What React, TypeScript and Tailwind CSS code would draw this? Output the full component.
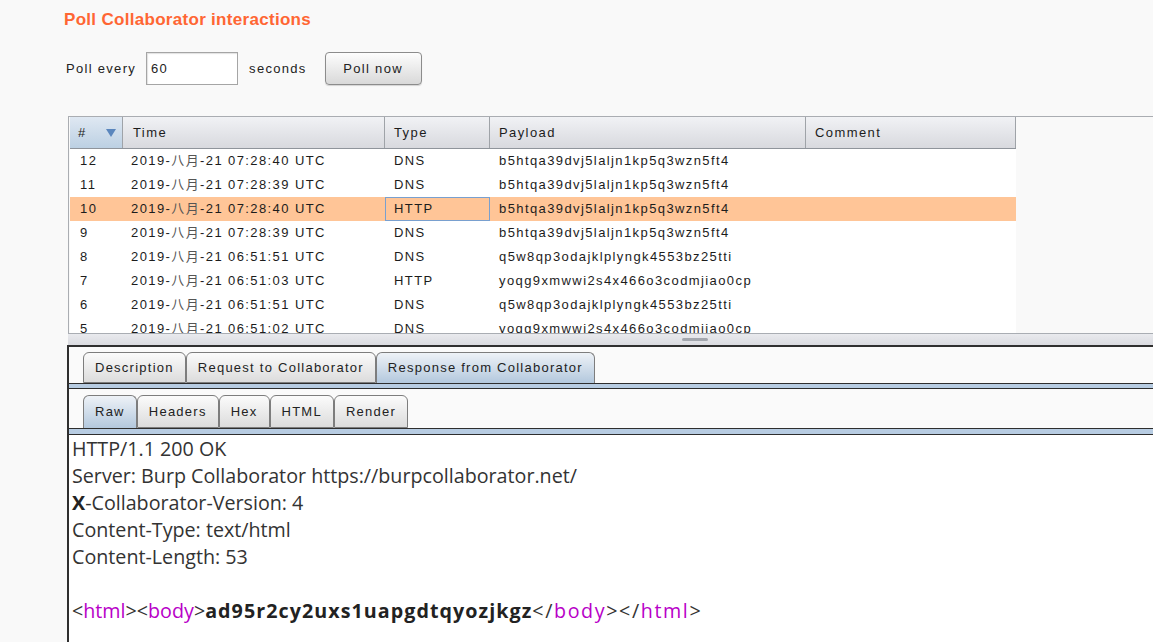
import React from "react";

const ui = "font-['Liberation_Sans','Noto_Sans_CJK_SC',sans-serif]";

const rows = [
  ["12", "07:28:40", "DNS", "b5htqa39dvj5laljn1kp5q3wzn5ft4"],
  ["11", "07:28:39", "DNS", "b5htqa39dvj5laljn1kp5q3wzn5ft4"],
  ["10", "07:28:40", "HTTP", "b5htqa39dvj5laljn1kp5q3wzn5ft4"],
  ["9", "07:28:39", "DNS", "b5htqa39dvj5laljn1kp5q3wzn5ft4"],
  ["8", "06:51:51", "DNS", "q5w8qp3odajklplyngk4553bz25tti"],
  ["7", "06:51:03", "HTTP", "yoqg9xmwwi2s4x466o3codmjiao0cp"],
  ["6", "06:51:51", "DNS", "q5w8qp3odajklplyngk4553bz25tti"],
  ["5", "06:51:02", "DNS", "yoqg9xmwwi2s4x466o3codmjiao0cp"],
];

function Tab({ label, active }: { label: string; active?: boolean }) {
  return (
    <div
      className={
        "flex h-full items-center rounded-t-[6px] border border-[#7d7d7d] px-[11px] text-[13px] tracking-[1.25px] text-[#222] " +
        (active
          ? "relative z-10 -mb-px border-b-0 bg-gradient-to-b from-[#eef2f7] to-[#b3c8dd]"
          : "bg-gradient-to-b from-[#fbfbfb] to-[#dcdcdc]")
      }
    >
      {label}
    </div>
  );
}

function Strip({ tall }: { tall?: boolean }) {
  return (
    <div
      className={
        "border-y border-[#2e2e2e] bg-[#b7cce2] " + (tall ? "h-[7px]" : "h-[6px]")
      }
    />
  );
}

const tag = "text-[#b800c8]";

export default function App() {
  return (
    <div className={`h-[642px] w-full overflow-hidden bg-[#f9f9f9] ${ui}`}>
      <h1 className="pl-[64px] pt-[11px] text-[17px] font-bold leading-[18px] tracking-[0.3px] text-[#ff6633]">
        Poll Collaborator interactions
      </h1>

      <div className="mt-[23px] flex h-[33px] items-center pl-[66px] text-[13px] tracking-[1.3px] text-[#222]">
        <span>Poll every</span>
        <div className="ml-[10px] flex h-[33px] w-[92px] items-center border border-[#a5a5a5] bg-white pl-[4px] shadow-[inset_1px_1px_1px_rgba(0,0,0,0.12)]">
          60
        </div>
        <span className="ml-[11px]">seconds</span>
        <button className="ml-[18px] h-[33px] w-[97px] rounded-[4px] border border-[#8c8c8c] bg-gradient-to-b from-[#fdfdfd] to-[#d9d9d9] text-[13px] tracking-[1.3px] text-[#222] shadow-[0_1px_1px_rgba(0,0,0,0.15)]">
          Poll now
        </button>
      </div>

      {/* upper split: table */}
      <div className="ml-[68px] mt-[31px] border-l border-t border-[#aaadb2] pl-[1px]">
        <div className="h-[216px] w-[946px] overflow-hidden bg-white text-[13px] tracking-[1.4px] text-[#1c1c1c]">
          <div className="flex h-[32px] border-b border-[#8f949b] bg-gradient-to-b from-[#f1f2f5] to-[#d8d9de]">
            <div className="flex w-[53px] items-center justify-between border-r border-[#9fa3a8] bg-gradient-to-b from-[#dfe8f2] to-[#bcd0e3] pl-[8px] pr-[6px]">
              <span>#</span>
              <svg width="10" height="8" viewBox="0 0 10 8">
                <polygon points="0,0 10,0 5,8" fill="#5a86bd" />
              </svg>
            </div>
            <div className="flex w-[262px] items-center border-r border-[#9fa3a8] pl-[10px]">Time</div>
            <div className="flex w-[105px] items-center border-r border-[#9fa3a8] pl-[9px]">Type</div>
            <div className="flex w-[316px] items-center border-r border-[#9fa3a8] pl-[9px]">Payload</div>
            <div className="flex w-[210px] items-center border-r border-[#9fa3a8] pl-[9px]">Comment</div>
          </div>
          {rows.map(([n, t, type, payload], i) => {
            const sel = i === 2;
            return (
              <div key={n} className={"flex h-[24px] items-center " + (sel ? "bg-[#ffc597]" : "")}>
                <div className="w-[53px] pl-[10px]">{n}</div>
                <div className="w-[262px] pl-[8px]">
                  2019-<span className="text-[#555]">八月</span>-21 {t} UTC
                </div>
                <div
                  className={
                    "flex h-full w-[105px] items-center " +
                    (sel ? "border border-[#79a0cf] pl-[8px]" : "pl-[9px]")
                  }
                >
                  {type}
                </div>
                <div className="w-[316px] pl-[9px]">{payload}</div>
                <div className="w-[210px]" />
              </div>
            );
          })}
        </div>
      </div>

      {/* divider */}
      <div className="ml-[68px] h-[12px] border-t border-[#a9adb3] bg-gradient-to-b from-[#e9eaee] to-[#dadbe0] pl-[614px] pt-[4px]">
        <div className="h-[3px] w-[26px] rounded-full bg-[#a3a7ae]" />
      </div>

      {/* lower split: message viewer */}
      <div className="ml-[67px] border-l-2 border-t-2 border-[#2f2f2f] bg-[#fafafa]">
        <div className="flex h-[36px] items-end pl-[14px]">
          <div className="flex h-[31px]">
            <Tab label="Description" />
            <Tab label="Request to Collaborator" />
            <Tab label="Response from Collaborator" active />
          </div>
        </div>
        <Strip />
        <div className="flex h-[39px] items-end pl-[14px]">
          <div className="flex h-[33px]">
            <Tab label="Raw" active />
            <Tab label="Headers" />
            <Tab label="Hex" />
            <Tab label="HTML" />
            <Tab label="Render" />
          </div>
        </div>
        <Strip tall />
        <div className="h-[220px] bg-white pl-[3px] font-['Open_Sans',sans-serif] text-[19.7px] leading-[27px] text-[#333]">
          <div>HTTP/1.1 200 OK</div>
          <div>Server: Burp Collaborator https://burpcollaborator.net/</div>
          <div>
            <b className="text-[#222]">X</b>-Collaborator-Version: 4
          </div>
          <div>Content-Type: text/html</div>
          <div>Content-Length: 53</div>
          <div>&nbsp;</div>
          <div>
            &lt;<span className={tag}>html</span>&gt;&lt;<span className={tag}>body</span>&gt;
            <b className="tracking-[1.05px] text-[#222]">ad95r2cy2uxs1uapgdtqyozjkgz</b>
            <span className="tracking-[1.6px]">
              &lt;/<span className={tag}>body</span>&gt;&lt;/<span className={tag}>html</span>&gt;
            </span>
          </div>
        </div>
      </div>
    </div>
  );
}
